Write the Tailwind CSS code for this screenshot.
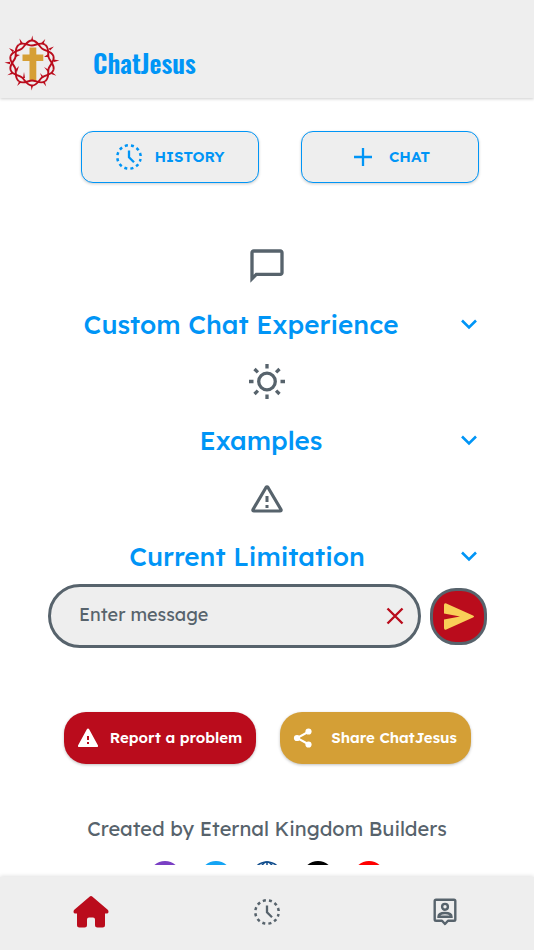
<!DOCTYPE html>
<html lang="en">
<head>
<meta charset="utf-8">
<meta name="viewport" content="width=device-width, initial-scale=1">
<title>ChatJesus</title>
<script src="https://cdn.jsdelivr.net/npm/@tailwindcss/browser@4"></script>
</head>
<body class="flex h-screen flex-col bg-white font-['Lexend',Inter,sans-serif] text-[#57636c]">
<svg class="hidden" aria-hidden="true">
  <symbol id="clock" viewBox="0 0 26 26">
    <circle cx="13" cy="13" r="11.700" fill="none" stroke="currentColor" stroke-width="2.500" stroke-dasharray="3.100 3.026" stroke-dashoffset="1.500" transform="rotate(15 13 13)"/>
    <path d="M13 6.500v6.700l5 5" fill="none" stroke="currentColor" stroke-width="2.300"/>
  </symbol>
  <symbol id="chevron" viewBox="0 0 24 24"><path d="M5 8.500l7 7 7-7" fill="none" stroke="currentColor" stroke-width="2.600"/></symbol>
  <g id="vine">
    <path d="M0-22.500C5.500-22.500 7.100-16.500 10.300-14.200C13.500-11.900 19.700-12.200 21.400-7" fill="none" stroke="#ba0c1c" stroke-width="1.900"/>
  </g>
  <path id="thorn" d="M-1.200-22L.4-27.500L1.200-22Z" fill="#ba0c1c"/>
</svg>

<header class="z-10 flex h-[98px] shrink-0 items-end bg-[#eeeeee] px-1 pb-[7px] shadow-[0_1px_3px_rgba(0,0,0,0.2)]">
  <svg class="size-[56px]" viewBox="-28 -28 56 56" role="img" aria-label="Crown of thorns and cross">
    <path d="M-2.500-15.500h6.800v7h7v6.500h-7V18h-6.800V-2h-7v-6.500h7z" fill="#d69f35"/>
    <use href="#vine"/>
    <use href="#vine" transform="rotate(72)"/>
    <use href="#vine" transform="rotate(144)"/>
    <use href="#vine" transform="rotate(216)"/>
    <use href="#vine" transform="rotate(288)"/>
    <use href="#vine" transform="rotate(36)"/>
    <use href="#vine" transform="rotate(108)"/>
    <use href="#vine" transform="rotate(180)"/>
    <use href="#vine" transform="rotate(252)"/>
    <use href="#vine" transform="rotate(324)"/>
    <use href="#thorn"/>
    <use href="#thorn" transform="rotate(28)"/>
    <use href="#thorn" transform="rotate(52)"/>
    <use href="#thorn" transform="rotate(84)"/>
    <use href="#thorn" transform="rotate(117)"/>
    <use href="#thorn" transform="rotate(148)"/>
    <use href="#thorn" transform="rotate(180)"/>
    <use href="#thorn" transform="rotate(212)"/>
    <use href="#thorn" transform="rotate(243)"/>
    <use href="#thorn" transform="rotate(270)"/>
    <use href="#thorn" transform="rotate(302)"/>
    <use href="#thorn" transform="rotate(332)"/>
    <path d="M-17-9l5 1-4 2zM16-9l-4 3 5 0zM-17 7l4-4-2 6zM17 7l-5-3 4 5zM-9 15l1-6 1 6zM10 15l-2-5 4 4z" fill="#ba0c1c"/>
  </svg>
  <h1 class="mb-3 ml-[33px] font-['Oswald','Liberation_Sans_Narrow',sans-serif] text-[26px] leading-8 font-semibold text-[#0095f6]">ChatJesus</h1>
</header>

<main class="mb-3 min-h-0 flex-1 overflow-y-auto [scrollbar-width:none]">
  <div class="flex justify-center gap-[42px] pt-[33px] pl-[26px] text-[15px] font-semibold text-[#0095f6]">
    <button type="button" class="flex h-[52px] w-[178px] items-center justify-center gap-[13px] rounded-xl border border-[#0095f6] bg-[#eeeeee] shadow-[0_1px_3px_rgba(0,0,0,0.2)]">
      <svg class="size-[26px]"><use href="#clock"/></svg>HISTORY
    </button>
    <button type="button" class="flex h-[52px] w-[178px] items-center justify-center gap-[13px] rounded-xl border border-[#0095f6] bg-[#eeeeee] shadow-[0_1px_3px_rgba(0,0,0,0.2)]">
      <svg class="size-[26px]" viewBox="0 0 26 26" fill="none" stroke="currentColor" stroke-width="2.300"><path d="M13 4v18M4 13h18"/></svg>CHAT
    </button>
  </div>

  <div class="flex flex-col gap-[10px] px-[53px] pt-[63px]">
    <section>
      <svg class="mx-auto size-10" viewBox="0 0 24 24" fill="currentColor"><path d="M20 2H4c-1.100 0-2 .9-2 2v18l4-4h14c1.100 0 2-.9 2-2V4c0-1.100-.9-2-2-2zm0 14H5.200L4 17.200V4h16v12z"/></svg>
      <button type="button" class="mt-[10px] flex h-14 w-full items-center text-[26px] leading-8 font-medium text-[#0095f6]"><span class="flex-1 pt-0.5 pr-7 whitespace-nowrap">Custom Chat Experience</span><svg class="size-6"><use href="#chevron"/></svg></button>
    </section>
    <section>
      <svg class="mx-auto size-10" viewBox="0 0 40 40" fill="none" stroke="currentColor" stroke-width="3.300"><circle cx="20" cy="19.500" r="8.300"/><path d="M20 2v4.500M20 32.500V37M2 19.500h4.500M33.500 19.500H38M7.500 7l3.400 3.400M29.100 28.600l3.400 3.400M32.500 7l-3.400 3.400M10.900 28.600L7.500 32"/></svg>
      <button type="button" class="mt-[10px] flex h-14 w-full items-center text-[26px] leading-8 font-medium text-[#0095f6]"><span class="flex-1 pt-0.5 pl-3">Examples</span><svg class="size-6"><use href="#chevron"/></svg></button>
    </section>
    <section>
      <svg class="mx-auto size-10" viewBox="0 0 40 40" fill="none" stroke="currentColor" stroke-width="3.200" stroke-linejoin="round"><path d="M19 9.500Q20 8 21 9.500L34 31.500Q34.500 33 33 33h-26Q5.500 33 6 31.500z"/><path d="M20 18v6M20 27v3" stroke-width="3"/></svg>
      <button type="button" class="mt-[10px] flex h-14 w-full items-center text-[26px] leading-8 font-medium text-[#0095f6]"><span class="flex-1 pt-0.5 pr-4">Current Limitation</span><svg class="size-6"><use href="#chevron"/></svg></button>
    </section>
  </div>

  <form class="flex items-center gap-[9px] pr-[47px] pl-12">
    <div class="flex h-16 flex-1 items-center rounded-full border-[3px] border-[#57636c] bg-[#eeeeee] pr-[11px] pl-7">
      <input type="text" aria-label="Enter message" placeholder="Enter message" class="min-w-0 flex-1 pb-0.5 text-lg outline-none placeholder:text-[#57636c]">
      <button type="button" aria-label="Clear message" class="text-[#ba0c1c]"><svg class="size-6" viewBox="0 0 24 24" fill="none" stroke="currentColor" stroke-width="2.400"><path d="M4.500 4.500l15 15M19.500 4.500l-15 15"/></svg></button>
    </div>
    <button type="submit" aria-label="Send" class="flex size-[57px] items-center justify-center rounded-[26px] border-[3px] border-[#57636c] bg-[#ba0c1c] text-[#f9cf58]"><svg class="h-[27px] w-[30px]" viewBox="0 0 30 27" fill="currentColor"><path d="M0 2Q0-.4 2.300.4L29 12.500Q31 13.500 29 14.500L2.300 26.600Q0 27.400 0 25V16.500L16 13.500L0 10.500z"/></svg></button>
  </form>

  <div class="flex justify-center gap-6 pt-16 text-[15px] font-semibold text-white">
    <button type="button" class="flex h-[52px] w-[192px] items-center justify-center gap-[11px] rounded-[22px] bg-[#ba0c1c] whitespace-nowrap shadow-[0_1px_3px_rgba(0,0,0,0.25)]">
      <svg class="h-5 w-[22px] shrink-0" viewBox="0 0 22 20" fill="currentColor"><path fill-rule="evenodd" d="M11 .5Q11.700.5 12 1L21 17.500Q21.500 19 20 19H2Q.5 19 1 17.500L10 1Q10.300.5 11 .5zM10 8v4h2V8zM10 14v2h2v-2z"/></svg>Report a problem
    </button>
    <button type="button" class="flex h-[52px] w-[191px] items-center justify-center gap-[18px] rounded-[22px] bg-[#d49f36] whitespace-nowrap shadow-[0_1px_3px_rgba(0,0,0,0.25)]">
      <svg class="size-5 shrink-0" viewBox="0 0 20 20" fill="none" stroke="currentColor" stroke-width="2"><path d="M16 3.500L4 10l12 6.500"/><g fill="currentColor" stroke="none"><circle cx="15.500" cy="3.500" r="3.100"/><circle cx="4" cy="10" r="3.100"/><circle cx="15.500" cy="16.500" r="3.100"/></g></svg>Share ChatJesus
    </button>
  </div>

  <p class="pt-[50px] text-center text-xl leading-[30px]">Created by Eternal Kingdom Builders</p>
  <div class="flex justify-center gap-[19px] pt-[17px]">
    <a href="#" aria-label="Podcast" class="size-8 rounded-full bg-[#7a3fc4]"></a>
    <a href="#" aria-label="Twitter" class="size-8 rounded-full bg-[#14a4f4]"></a>
    <a href="#" aria-label="Website" class="size-8"><svg class="size-8" viewBox="0 0 32 32" fill="none" stroke="#0f4c8c" stroke-width="1.500"><circle cx="16" cy="16" r="15"/><ellipse cx="16" cy="16" rx="8" ry="15"/><path d="M16 1v30M1 16h30M4 7q12 5 24 0M4 25q12-5 24 0"/></svg></a>
    <a href="#" aria-label="TikTok" class="size-8 rounded-full bg-black"></a>
    <a href="#" aria-label="YouTube" class="size-8 rounded-full bg-[#ff0000]"></a>
  </div>
</main>

<nav class="grid h-[73px] shrink-0 grid-cols-3 bg-[#eeeeee] shadow-[0_-1px_4px_rgba(0,0,0,0.12)]">
  <a href="#" aria-label="Home" class="flex items-center justify-center pb-[3px] pl-1 text-[#ba0c1c]"><svg class="h-[32px] w-[36px]" viewBox="0 0 36 32" fill="currentColor"><path d="M16.500.7Q18-.5 19.500.7L35 14Q36.500 17.500 33.500 17.500H32V29Q32 31.500 29.500 31.500H24.500Q22 31.500 22 29V23.500Q22 21.500 20 21.500H16Q14 21.500 14 23.500V29Q14 31.500 11.500 31.500H6.500Q4 31.500 4 29V17.500H2.500Q-.5 17.500 1 14z"/></svg></a>
  <a href="#" aria-label="History" class="flex items-center justify-center pb-[3px]"><svg class="size-[26px]"><use href="#clock"/></svg></a>
  <a href="#" aria-label="Profile" class="flex items-center justify-center pb-[3px]"><svg class="h-[28px] w-6" viewBox="0 0 24 28" fill="none" stroke="currentColor" stroke-width="2.400"><path d="M3 1.700h18q1.300 0 1.300 1.300v18.500q0 1.300-1.300 1.300h-6L12 26l-3-3.200H3q-1.300 0-1.300-1.300V3Q1.700 1.700 3 1.700z" stroke-linejoin="round"/><circle cx="12" cy="8.800" r="2.900"/><path d="M5.500 18.800q0-3.800 6.500-3.800t6.500 3.800z"/></svg></a>
</nav>
</body>
</html>
